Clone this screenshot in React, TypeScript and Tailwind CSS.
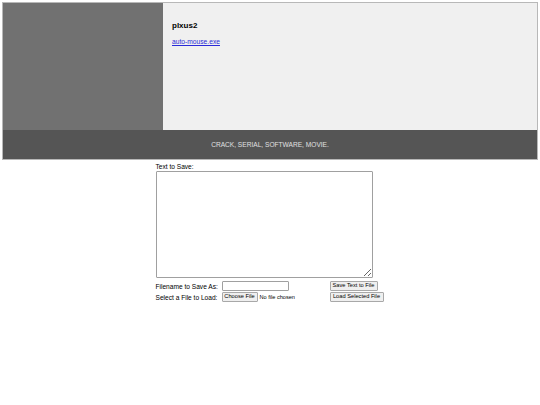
export default function App() {
  return (
    <div className="min-h-[405px] bg-white font-['Liberation_Sans',Arial,sans-serif] text-black">
      <div className="mx-[2px] pt-[2px]">
        <div className="border border-[#b8b8b8]">
          <div className="flex h-[127px]">
            <div className="w-[160px] bg-[#717171]" />
            <div className="flex-1 bg-[#f0f0f0] pl-[9px] pt-[18px]">
              <h2 className="text-[8px] font-bold leading-[10px]">plxus2</h2>
              <a
                href="#"
                className="mt-[7px] block text-[6.7px] leading-[8px] text-[#2a2ad8] underline"
              >
                auto-mouse.exe
              </a>
            </div>
          </div>
          <div className="flex h-[29px] items-center justify-center bg-[#555555] text-[6.6px] font-normal text-[#e0e0e0]">
            CRACK, SERIAL, SOFTWARE, MOVIE.
          </div>
        </div>
      </div>

      <div className="mx-auto w-[229px] text-[6.6px] leading-[9px]">
        <div className="pt-[2px]">Text to Save:</div>
        <textarea className="block h-[107px] w-[217px] rounded-[1px] border border-[#a0a0a0] bg-white" />
        <div className="mt-[3px] grid grid-cols-[66px_108px_auto] gap-y-[1px]">
          <div className="flex h-[10px] items-center">Filename to Save As:</div>
          <div className="flex h-[10px] items-center">
            <input className="h-[10px] w-[67px] rounded-[1px] border border-[#a0a0a0] bg-white" />
          </div>
          <div className="flex h-[10px] items-center">
            <button className="h-[10px] w-[48px] rounded-[1px] border border-[#a8a8a8] bg-[#efefef] text-[5.7px] leading-none">
              Save Text to File
            </button>
          </div>
          <div className="flex h-[10px] items-center">Select a File to Load:</div>
          <div className="flex h-[10px] items-center gap-[2px]">
            <button className="h-[10px] w-[36px] rounded-[1px] border border-[#a8a8a8] bg-[#efefef] text-[5.7px] leading-none">
              Choose File
            </button>
            <span className="text-[5.6px]">No file chosen</span>
          </div>
          <div className="flex h-[10px] items-center">
            <button className="h-[10px] w-[54px] rounded-[1px] border border-[#a8a8a8] bg-[#efefef] text-[5.7px] leading-none">
              Load Selected File
            </button>
          </div>
        </div>
      </div>
    </div>
  );
}
